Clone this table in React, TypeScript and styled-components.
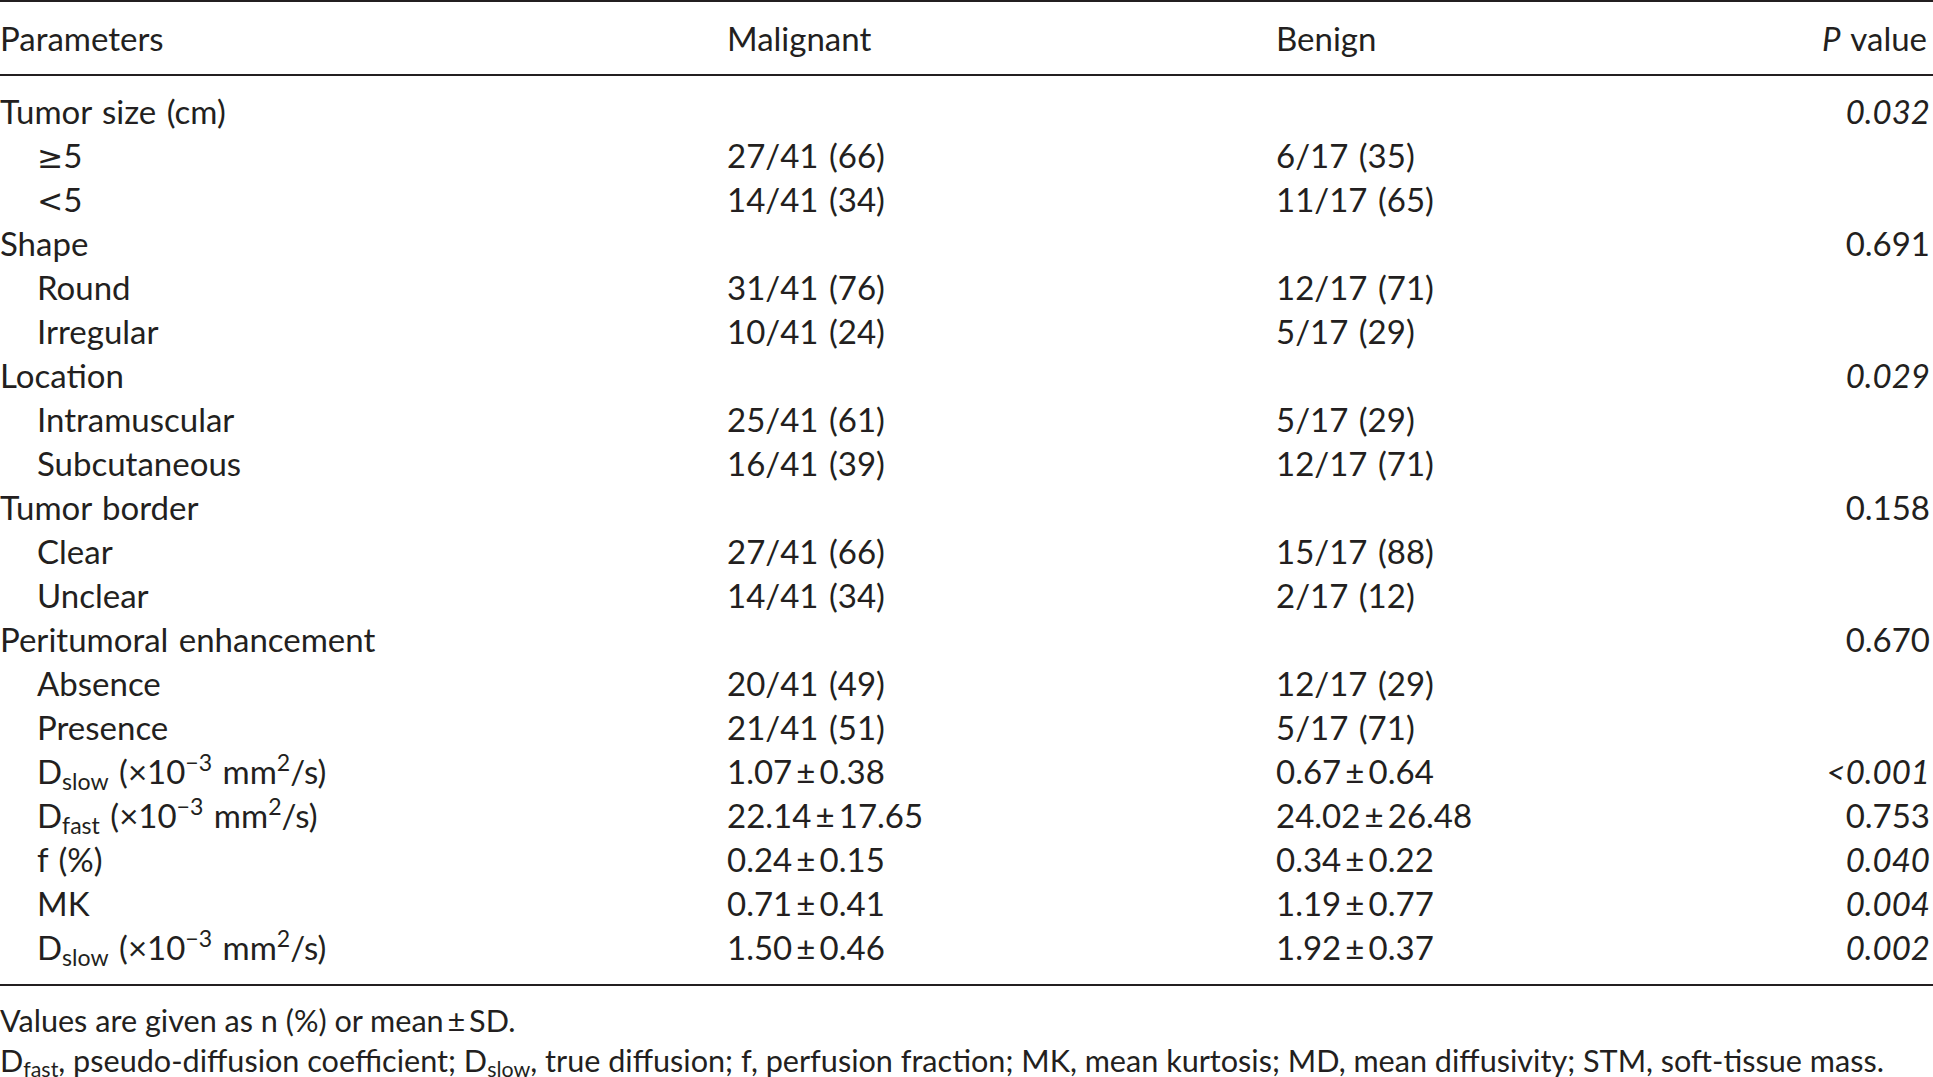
import React from "react";
import styled, { createGlobalStyle } from "styled-components";

const Global = createGlobalStyle`
  html, body { margin: 0; padding: 0; background: #ffffff; }
  body { font-family: Lato, "Open Sans", sans-serif; color: #231f20; }
`;

const Page = styled.div`
  width: 1933px;
  display: flex;
  flex-direction: column;
`;

const Table = styled.div`
  display: grid;
  grid-template-columns: 727px 549px 1fr max-content;
  border-top: 2px solid #231f20;
  border-bottom: 2px solid #231f20;
  font-size: 33px;
  line-height: 44px;
  word-spacing: 2px;
`;

const HeadCell = styled.div<{ $right?: boolean }>`
  padding: 14px 0 14px;
  border-bottom: 2px solid #231f20;
  text-align: ${(p) => (p.$right ? "right" : "left")};
  padding-right: ${(p) => (p.$right ? "6px" : "0")};
  white-space: nowrap;
`;

const Cell = styled.div<{ $right?: boolean; $indent?: boolean; $italic?: boolean; $first?: boolean; $last?: boolean }>`
  text-align: ${(p) => (p.$right ? "right" : "left")};
  padding-left: ${(p) => (p.$indent ? "37px" : "0")};
  padding-right: ${(p) => (p.$right ? "3px" : "0")};
  padding-top: ${(p) => (p.$first ? "12.5px" : "0")};
  padding-bottom: ${(p) => (p.$last ? "15px" : "0")};
  font-style: ${(p) => (p.$italic ? "italic" : "normal")};
  white-space: nowrap;
`;

const MathSym = styled.span`
  font-family: "DejaVu Sans", sans-serif;
  font-size: 0.95em;
  line-height: 0;
`;

const Sub = styled.sub`
  font-size: 0.7em;
  vertical-align: -0.25em;
  line-height: 0;
`;

const Sup = styled.sup`
  font-size: 0.7em;
  vertical-align: 0.55em;
  line-height: 0;
`;

const Notes = styled.div`
  display: flex;
  flex-direction: column;
  font-size: 30.6px;
  line-height: 40px;
  padding-top: 15.5px;
`;

const Note = styled.div`
  white-space: nowrap;
`;

type Row = {
  label: React.ReactNode;
  indent?: boolean;
  mal?: string;
  ben?: string;
  p?: string;
  italic?: boolean;
};

const PM = "\u2009±\u2009";

const DUnit = ({ sub }: { sub: string }) => (
  <>
    D<Sub>{sub}</Sub> (×10<Sup>−3</Sup> mm<Sup>2</Sup>/s)
  </>
);

const rows: Row[] = [
  { label: "Tumor size (cm)", p: "0.032", italic: true },
  { label: <><MathSym>≥</MathSym>5</>, indent: true, mal: "27/41 (66)", ben: "6/17 (35)" },
  { label: <><MathSym>&lt;</MathSym>5</>, indent: true, mal: "14/41 (34)", ben: "11/17 (65)" },
  { label: "Shape", p: "0.691" },
  { label: "Round", indent: true, mal: "31/41 (76)", ben: "12/17 (71)" },
  { label: "Irregular", indent: true, mal: "10/41 (24)", ben: "5/17 (29)" },
  { label: "Location", p: "0.029", italic: true },
  { label: "Intramuscular", indent: true, mal: "25/41 (61)", ben: "5/17 (29)" },
  { label: "Subcutaneous", indent: true, mal: "16/41 (39)", ben: "12/17 (71)" },
  { label: "Tumor border", p: "0.158" },
  { label: "Clear", indent: true, mal: "27/41 (66)", ben: "15/17 (88)" },
  { label: "Unclear", indent: true, mal: "14/41 (34)", ben: "2/17 (12)" },
  { label: "Peritumoral enhancement", p: "0.670" },
  { label: "Absence", indent: true, mal: "20/41 (49)", ben: "12/17 (29)" },
  { label: "Presence", indent: true, mal: "21/41 (51)", ben: "5/17 (71)" },
  { label: <DUnit sub="slow" />, indent: true, mal: `1.07${PM}0.38`, ben: `0.67${PM}0.64`, p: "<0.001", italic: true },
  { label: <DUnit sub="fast" />, indent: true, mal: `22.14${PM}17.65`, ben: `24.02${PM}26.48`, p: "0.753" },
  { label: "f (%)", indent: true, mal: `0.24${PM}0.15`, ben: `0.34${PM}0.22`, p: "0.040", italic: true },
  { label: "MK", indent: true, mal: `0.71${PM}0.41`, ben: `1.19${PM}0.77`, p: "0.004", italic: true },
  { label: <DUnit sub="slow" />, indent: true, mal: `1.50${PM}0.46`, ben: `1.92${PM}0.37`, p: "0.002", italic: true },
];

export default function App() {
  return (
    <Page>
      <Global />
      <Table>
        <HeadCell>Parameters</HeadCell>
        <HeadCell>Malignant</HeadCell>
        <HeadCell>Benign</HeadCell>
        <HeadCell $right>
          <i>P</i> value
        </HeadCell>
        {rows.map((r, i) => {
          const first = i === 0;
          const last = i === rows.length - 1;
          return (
            <React.Fragment key={i}>
              <Cell $indent={r.indent} $first={first} $last={last}>
                {r.label}
              </Cell>
              <Cell $first={first} $last={last}>{r.mal ?? ""}</Cell>
              <Cell $first={first} $last={last}>{r.ben ?? ""}</Cell>
              <Cell $right $italic={r.italic} $first={first} $last={last}>
                {r.p ?? ""}
              </Cell>
            </React.Fragment>
          );
        })}
      </Table>
      <Notes>
        <Note>Values are given as n (%) or mean{PM}SD.</Note>
        <Note>
          D<Sub>fast</Sub>, pseudo-diffusion coefficient; D<Sub>slow</Sub>, true diffusion; f, perfusion fraction; MK,
          mean kurtosis; MD, mean diffusivity; STM, soft-tissue mass.
        </Note>
      </Notes>
    </Page>
  );
}
